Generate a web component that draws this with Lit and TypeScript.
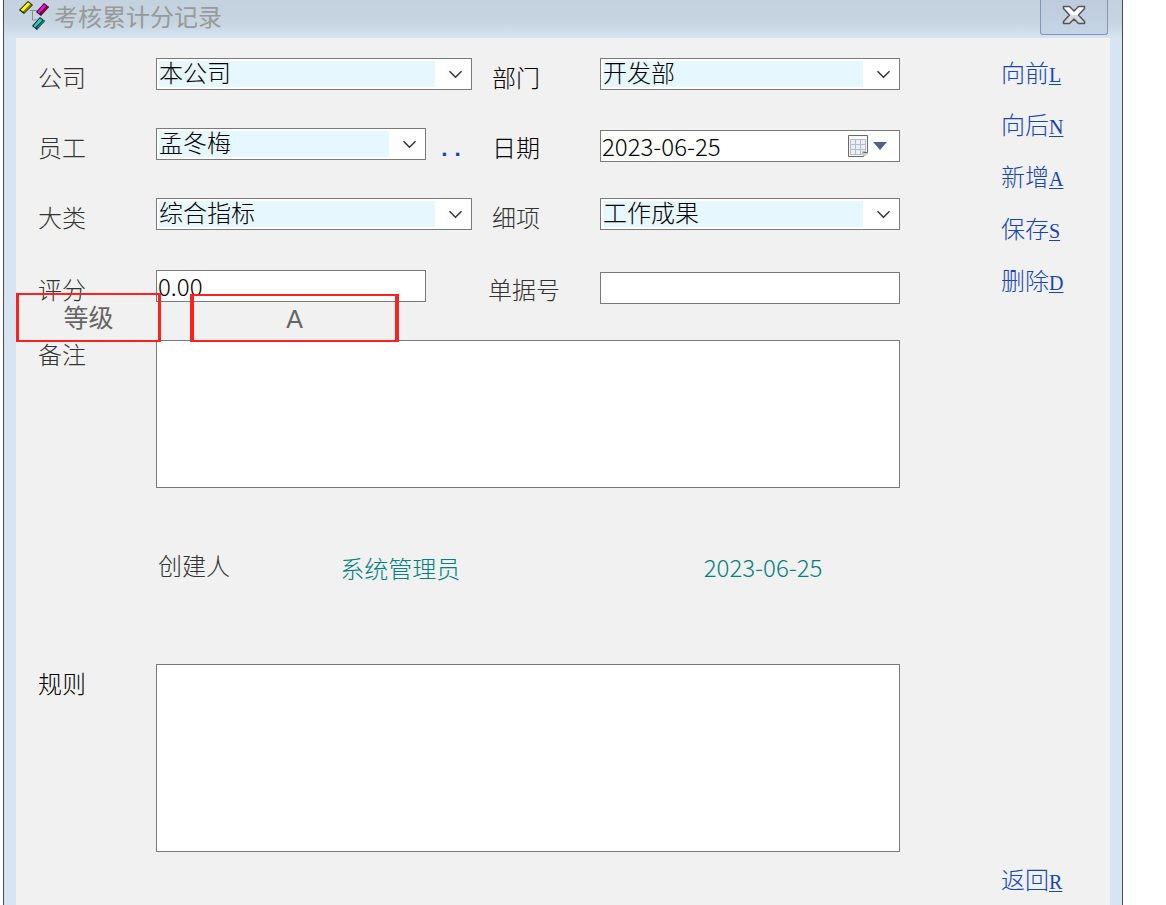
import { LitElement, html, svg, css } from "lit";
import { customElement, property } from "lit/decorators.js";

const controlStyles = css`
  :host {
    display: block;
    min-width: 0;
  }
  .box {
    position: relative;
    display: block;
  }
  .control {
    display: block;
    box-sizing: border-box;
    width: 100%;
    height: 32px;
    margin: 0;
    padding: 0 1px 2px;
    border: 1px solid #7a7a7a;
    border-radius: 0;
    outline: none;
    background: #fff;
    color: #000;
    font-family: "Noto Sans CJK SC", sans-serif;
    font-size: 24px;
    font-weight: 300;
  }
`;

class FormControl extends LitElement {
  static formAssociated = true;
  static shadowRootOptions = { ...LitElement.shadowRootOptions, delegatesFocus: true };
  @property() name = "";
  @property() value = "";
}

@customElement("form-select")
class FormSelect extends FormControl {
  static styles = [
    controlStyles,
    css`
      .control {
        appearance: none;
        padding: 0 36px 0 2px;
        font-family: "Liberation Serif", "Noto Sans CJK SC", serif;
        background: linear-gradient(#e6f7fd, #e6f7fd) 2px 2px / calc(100% - 38px) 26px no-repeat #fff;
      }
      .chevron {
        position: absolute;
        right: 9px;
        top: 12px;
        pointer-events: none;
      }
    `,
  ];
  render() {
    return html`<span class="box">
      <select class="control" aria-label=${this.name}>
        <option>${this.value}</option>
      </select>
      <svg class="chevron" width="15" height="9" viewBox="0 0 15 9">
        <path d="M1.5 1.2 7.5 7.2 13.5 1.2" fill="none" stroke="#333" stroke-width="1.5" />
      </svg>
    </span>`;
  }
}

@customElement("form-date")
class FormDate extends FormControl {
  static styles = [
    controlStyles,
    css`
      .picker {
        position: absolute;
        right: 11px;
        top: 4px;
        width: 42px;
        height: 25px;
        padding: 0;
        border: 0;
        background: none;
      }
      .glyph {
        display: block;
      }
    `,
  ];
  render() {
    return html`<span class="box">
      <input class="control" type="text" aria-label=${this.name} .value=${this.value} />
      <button class="picker" type="button" aria-label="选择日期">
        <svg class="glyph" width="42" height="25" viewBox="0 0 42 25">
          <path d="M2 3h19v17l-4 3H3z" fill="#d5d2d0" />
          <path d="M1.5 1.5h19v17h-4v4h-15z" fill="#f3f5f9" stroke="#75655f" stroke-linejoin="round" />
          <path d="M3 3h16v2H3z" fill="#fff" />
          <path d="M3.5 5.5h15v12h-3v3h-12zM8.5 5.5v15M13.5 5.5v15M3.5 10.5h15M3.5 15.5h15" fill="#e9eef7" stroke="#b4bbc9" />
          <path d="M16 19h4l-4 3.500z" fill="#c9c5c3" />
          <path d="M26 8h14l-7 8z" fill="#4c618c" />
        </svg>
      </button>
    </span>`;
  }
}

@customElement("form-text")
class FormText extends FormControl {
  static styles = controlStyles;
  render() {
    return html`<input class="control" type="text" aria-label=${this.name} .value=${this.value} />`;
  }
}

const actions = [
  ["向前", "L"],
  ["向后", "N"],
  ["新增", "A"],
  ["保存", "S"],
  ["删除", "D"],
  ["返回", "R"],
];

const tile = (x: number, y: number, light: string, dark: string, w = 9) => svg`
  <g transform="translate(${x} ${y})">
    <path d="M0 9 ${w} 0l5 4-${w} 9z" fill="#111" />
    <path d="M1.500 8.800 ${w} 1.200l2.500 1.900-7.500 7.600z" fill="${light}" />
    <path d="M4 10.700l7.500-7.600 1.500 1-7.500 7.600z" fill="${dark}" />
  </g>`;

@customElement("app-root")
class AppRoot extends LitElement {
  static styles = css`
    :host {
      display: block;
      background: #fff;
      font-family: "Liberation Serif", "Noto Sans CJK SC", serif;
      font-size: 24px;
      font-weight: 300;
      line-height: 32px;
      color: #333;
    }
    .window {
      display: flex;
      flex-direction: column;
      box-sizing: border-box;
      min-height: 100vh;
      margin: 0 43px 0 3px;
      padding: 0 12px;
      border: solid #4a4a4a;
      border-width: 0 1px;
      background: linear-gradient(#c4d1de, #c6d4e1 22px, #d7e4f1 38px);
    }
    .titlebar {
      display: flex;
      align-items: flex-start;
      height: 38px;
    }
    .logo {
      flex: none;
      margin: 0 4px 0 2px;
    }
    .title {
      flex: 1;
      margin: 0;
      font-family: "Noto Sans CJK SC", sans-serif;
      font-size: 24px;
      font-weight: 400;
      line-height: 32px;
      color: #999;
    }
    .close {
      display: flex;
      justify-content: center;
      box-sizing: border-box;
      width: 68px;
      height: 35px;
      margin: 0 2px 0 0;
      padding: 5px 0 0;
      border: 1px solid #8496b0;
      border-top: 0;
      border-radius: 0 0 3px 3px;
      background: linear-gradient(#bdcbdd, #c6d5e5);
    }
    .panel {
      position: relative;
      flex: 1;
      display: flex;
      gap: 101px;
      padding: 20px 49px 8px 22px;
      background: #f1f1f1;
    }
    .form {
      flex: 1;
      display: grid;
      grid-template-columns: 118px minmax(0, 316fr) 128px minmax(0, 300fr);
      grid-template-rows: 34px 34px 36px 34px 148px 104px 188px;
      row-gap: 36px;
      align-content: start;
      align-items: start;
    }
    .label {
      padding-top: 5px;
    }
    .label.tight {
      padding-top: 0;
    }
    .label.second {
      padding-left: 20px;
    }
    .label.wide {
      padding-left: 16px;
    }
    .strong {
      color: #000;
    }
    .low {
      align-self: end;
    }
    .employee {
      display: flex;
    }
    .employee form-select {
      flex: 1;
    }
    .short {
      margin-right: 46px;
    }
    .more {
      width: 46px;
      height: 44px;
      padding: 0 0 0 4px;
      border: 0;
      background: none;
      color: #0645c0;
      font-family: "Liberation Mono", monospace;
      font-size: 22px;
      font-weight: 700;
    }
    .area {
      grid-column: 2 / -1;
      box-sizing: border-box;
      width: 100%;
      height: 100%;
      margin: 0;
      border: 1px solid #7a7a7a;
      border-radius: 0;
      resize: none;
      background: #fff;
      font: inherit;
    }
    .created {
      grid-column: 2 / -1;
      display: grid;
      grid-template-columns: 182fr 363fr 196fr;
      padding: 27px 0 0 2px;
    }
    .teal {
      padding-top: 3px;
      color: #008080;
    }
    .date {
      padding-top: 0;
      font-family: "Noto Sans CJK SC", sans-serif;
    }
    .actions {
      flex: none;
      display: flex;
      flex-direction: column;
      gap: 20px;
      width: 60px;
    }
    .action {
      height: 32px;
      color: #1645b8;
      text-decoration: none;
      white-space: nowrap;
    }
    .action:last-child {
      margin-top: auto;
    }
    .key {
      font-size: 20px;
      text-underline-offset: 2px;
      text-decoration-thickness: 1px;
    }
    .mark {
      position: absolute;
      box-sizing: border-box;
      border: 2px solid #ff2020;
      font-family: "Liberation Sans", "Noto Sans CJK SC", sans-serif;
      font-size: 25px;
      font-weight: 400;
      line-height: 46px;
      text-align: center;
      color: #666;
    }
    .mark.name {
      left: 0;
      top: 255px;
      width: 145px;
      height: 49px;
      border-width: 2px 3px;
    }
    .mark.grade {
      left: 174px;
      top: 256px;
      width: 209px;
      height: 48px;
      border-width: 2px 4px;
    }
  `;

  render() {
    return html`
      <main class="window">
        <header class="titlebar">
          <svg class="logo" width="32" height="32" viewBox="0 0 32 32">
            <path d="M12 10.500h7M14.500 10.500v9.500h5" fill="none" stroke="#8e8e8e" />
            ${tile(1, 1, "#ffff00", "#8a8a00")} ${tile(18, 3, "#ff00ff", "#a00030", 8)}
            ${tile(14, 17, "#20d0d0", "#008484", 8)}
          </svg>
          <h1 class="title">考核累计分记录</h1>
          <button class="close" type="button" aria-label="关闭">
            <svg width="24" height="20" viewBox="0 0 24 20">
              <defs>
                <linearGradient id="x" x2="0" y2="1">
                  <stop offset=".5" stop-color="#fff" />
                  <stop offset=".5" stop-color="#d9d9d9" />
                </linearGradient>
              </defs>
              <path
                d="M1.500 1.500h6L12 6l4.500-4.500h6v2L16.500 10l6 6.500v2h-6L12 14l-4.500 4.500h-6v-2l6-6.500-6-6.500z"
                fill="url(#x)"
                stroke="#50545f"
                stroke-width="1.500"
                stroke-linejoin="round"
              />
            </svg>
          </button>
        </header>
        <section class="panel">
          <form class="form">
            <label class="label" for="company">公司</label>
            <form-select id="company" name="公司" value="本公司"></form-select>
            <label class="label second strong" for="dept">部门</label>
            <form-select id="dept" name="部门" value="开发部"></form-select>

            <label class="label" for="staff">员工</label>
            <div class="employee">
              <form-select id="staff" name="员工" value="孟冬梅"></form-select>
              <button class="more" type="button">..</button>
            </div>
            <label class="label second strong" for="date">日期</label>
            <form-date class="low" id="date" name="日期" value="2023-06-25"></form-date>

            <label class="label" for="kind">大类</label>
            <form-select id="kind" name="大类" value="综合指标"></form-select>
            <label class="label second" for="item">细项</label>
            <form-select id="item" name="细项" value="工作成果"></form-select>

            <label class="label" for="score">评分</label>
            <form-text class="short" id="score" name="评分" value="0.00"></form-text>
            <label class="label wide" for="doc">单据号</label>
            <form-text class="low" id="doc" name="单据号"></form-text>

            <label class="label tight" for="note">备注</label>
            <textarea class="area" id="note"></textarea>

            <div class="created">
              <span>创建人</span>
              <span class="teal">系统管理员</span>
              <span class="teal date">2023-06-25</span>
            </div>

            <label class="label strong" for="rule">规则</label>
            <textarea class="area" id="rule"></textarea>
          </form>
          <nav class="actions">
            ${actions.map(([text, key]) => html`<a class="action" href="#">${text}<u class="key">${key}</u></a>`)}
          </nav>
          <div class="mark name">等级</div>
          <div class="mark grade">A</div>
        </section>
      </main>
    `;
  }
}
